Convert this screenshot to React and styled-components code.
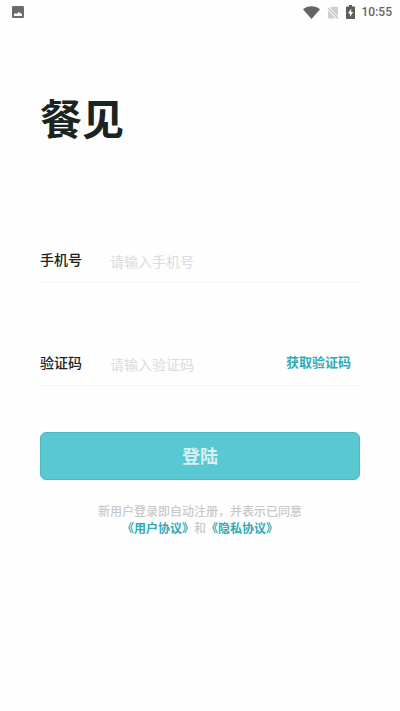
import React, { useState } from "react";
import styled, { createGlobalStyle } from "styled-components";

function App() {
  const [phone, setPhone] = useState("");
  const [code, setCode] = useState("");

  return (
    <>
      <GlobalStyle />
      <StatusBar>
        <svg width="12" height="12" viewBox="0 0 12 12" aria-hidden="true">
          <rect width="12" height="12" rx="1.2" fill="#6b6b6b" />
          <path d="M2 10V8.2L3.8 7l1.2 1 1.8-2.2L8 7.4l.8-.6L10 8.6V10z" fill="#fff" />
        </svg>
        <StatusIcons>
          <svg width="17" height="13" viewBox="0 0 17 13" aria-hidden="true">
            <path d="M0 3.2C4.6-.8 12.4-.8 17 3.2L8.5 13z" fill="#646464" />
          </svg>
          <svg width="12" height="13" viewBox="0 0 12 13" aria-hidden="true">
            <path d="M4.6.8H10q1 0 1 1v8.6L3.2 2.2z" fill="#d0d0d0" />
            <path d="M1 4.2l7.8 8.3H2q-1 0-1-1z" fill="#d0d0d0" />
            <path d="M.6 1.6l10.6 11" stroke="#b8b8b8" strokeWidth="1.1" />
          </svg>
          <svg width="9" height="14" viewBox="0 0 9 14" aria-hidden="true">
            <path d="M3 0h3v1.4h2.2q.8 0 .8.8v11q0 .8-.8.8H.8q-.8 0-.8-.8v-11q0-.8.8-.8H3z" fill="#5c5c5c" />
            <path d="M5.2 3.6L2 8.4h2v3.4L7.2 7H5.2z" fill="#fff" />
          </svg>
          <Time>10:55</Time>
        </StatusIcons>
      </StatusBar>
      <Content>
        <Title>餐见</Title>
        <form onSubmit={(e) => e.preventDefault()}>
          <Field>
            <Label htmlFor="phone">手机号</Label>
            <Input
              id="phone"
              type="tel"
              placeholder="请输入手机号"
              value={phone}
              onChange={(e) => setPhone(e.target.value)}
            />
          </Field>
          <Field>
            <Label htmlFor="code">验证码</Label>
            <Input
              id="code"
              type="text"
              placeholder="请输入验证码"
              value={code}
              onChange={(e) => setCode(e.target.value)}
            />
            <CodeButton type="button">获取验证码</CodeButton>
          </Field>
          <LoginButton type="submit">登陆</LoginButton>
        </form>
        <Terms>
          新用户登录即自动注册，并表示已同意
          <br />
          <TermsLink href="#user">《用户协议》</TermsLink>和
          <TermsLink href="#privacy">《隐私协议》</TermsLink>
        </Terms>
      </Content>
    </>
  );
}

export default App;

const GlobalStyle = createGlobalStyle`
  * {
    box-sizing: border-box;
  }

  body {
    margin: 0;
    background: #fefefe;
    font-family: "Noto Sans CJK SC", sans-serif;
  }

  input, button {
    font-family: inherit;
  }
`;

const StatusBar = styled.header`
  height: 24px;
  padding: 0 8px 0 12px;
  display: flex;
  align-items: center;
  justify-content: space-between;
`;

const StatusIcons = styled.div`
  display: flex;
  align-items: center;
  gap: 7px;
`;

const Time = styled.span`
  font-family: Roboto, sans-serif;
  font-size: 12px;
  font-weight: 500;
  line-height: 24px;
  color: #646464;
`;

const Content = styled.main`
  padding: 62px 40px 0;
`;

const Title = styled.h1`
  margin: 0 0 84px;
  font-size: 42px;
  font-weight: 700;
  line-height: 62px;
  color: #1a2421;
`;

const Field = styled.div`
  height: 51px;
  margin-bottom: 52px;
  padding-top: 3px;
  display: flex;
  align-items: center;
  border-bottom: 1px solid #f6f6f6;

  &:last-of-type {
    margin-bottom: 46px;
  }
`;

const Label = styled.label`
  width: 70px;
  font-size: 14px;
  font-weight: 500;
  line-height: 20px;
  color: #1a2421;
`;

const Input = styled.input`
  flex: 1;
  min-width: 0;
  padding: 4px 0 0;
  border: 0;
  outline: 0;
  background: transparent;
  font-size: 14px;
  line-height: 20px;
  color: #1a2421;

  &::placeholder {
    color: #d8dcdb;
  }
`;

const CodeButton = styled.button`
  padding: 0 9px;
  border: 0;
  background: transparent;
  font-size: 13px;
  font-weight: 700;
  line-height: 20px;
  color: #2fabb5;
`;

const LoginButton = styled.button`
  width: 100%;
  height: 48px;
  padding: 0 0 2px;
  border: 1px solid #4fb9c2;
  border-radius: 6px;
  background: #59c8d2;
  font-size: 18px;
  font-weight: 700;
  color: #dcefef;
`;

const Terms = styled.p`
  margin: 22px 0 0;
  font-size: 12px;
  font-weight: 500;
  line-height: 17px;
  text-align: center;
  color: #c6cac9;
`;

const TermsLink = styled.a`
  font-weight: 700;
  color: #2fabb5;
  text-decoration: none;
`;
